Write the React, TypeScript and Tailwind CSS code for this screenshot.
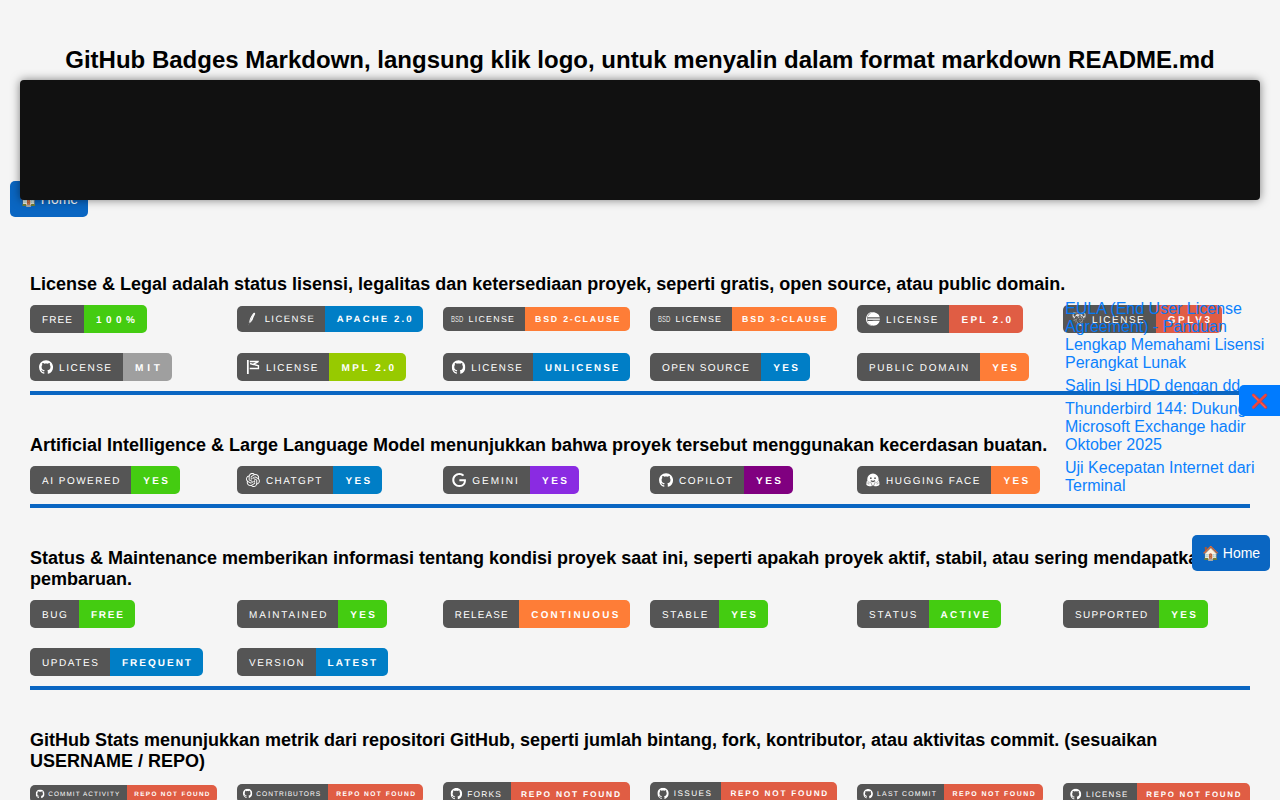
import type { ComponentType } from "react";
import { SiApache, SiEclipseide, SiGithub, SiGnu, SiGoogle, SiOpenai } from "react-icons/si";

type Logo = ComponentType<any>;

type BadgeData = {
  label: string;
  labelWidth: number;
  value: string;
  valueWidth: number;
  color: string;
  logo?: Logo;
};

const BRIGHT = "#44cc11";
const GREEN = "#97ca00";
const BLUE = "#007ec6";
const ORANGE = "#fe7d37";
const RED = "#e05d44";
const GREY = "#9f9f9f";

function MozillaLogo({ x, y }: any) {
  return (
    <svg x={x} y={y} width={14} height={14} viewBox="0 0 24 24" fill="none" stroke="#fff">
      <path d="M3.2 0v24" strokeWidth="3" />
      <path d="M6.5 2.6H22M20.500 3.200 12.500 7.400 21.500 10v4.600H6.5M7 6l6 1.800" strokeWidth="2.3" />
    </svg>
  );
}

function HuggingFaceLogo({ x, y }: any) {
  return (
    <svg x={x} y={y} width={14} height={14} viewBox="0 0 24 24">
      <path
        fill="#fff"
        d="M12 .8a9.900 9.900 0 0 0-9.800 9.900c0 1 .1 1.900.4 2.700C1.300 14 .9 15 1.200 16c-.8.8-.7 1.700-.3 2.400-.6 1-.3 1.900.7 2.500 1.600 1 3.800 1.900 5.900 1.900 1.400 0 2.400-.5 2.900-1.500h3.200c.5 1 1.500 1.500 2.900 1.500 2.100 0 4.300-.9 5.900-1.900 1-.6 1.300-1.500.7-2.500.4-.7.5-1.600-.3-2.400.3-1-.1-2-1.400-2.600.3-.8.4-1.700.4-2.700A9.900 9.900 0 0 0 12 .8Z"
      />
      <g fill="#555">
        <circle cx="8.400" cy="8.800" r="1.500" />
        <circle cx="15.600" cy="8.800" r="1.500" />
        <path d="M8.200 12c1.200.9 2.400 1.200 3.800 1.200s2.600-.3 3.800-1.200c.1 2.300-1.700 3.900-3.800 3.900s-3.900-1.600-3.800-3.900Z" />
      </g>
      <path
        d="M3.500 14.200l3 3.600M2.200 17l3.300 2.400M20.500 14.200l-3 3.600M21.800 17l-3.300 2.400M7.300 14.800l2 2.900.9 3.500M16.700 14.800l-2 2.900-.9 3.500"
        stroke="#555"
        strokeWidth=".9"
        fill="none"
      />
    </svg>
  );
}

function BsdLogo({ x, y }: any) {
  return (
    <text x={x} y={y + 10.4} fontSize="9.6" textLength="14" lengthAdjust="spacingAndGlyphs" fill="#fff" fillOpacity="0.85">
      BSD
    </text>
  );
}

function b(
  label: string,
  labelWidth: number,
  value: string,
  valueWidth: number,
  color: string,
  logo?: Logo,
): BadgeData {
  return { label, labelWidth, value, valueWidth, color, logo };
}

const repo = (label: string, width: number) => b(label, width, "REPO NOT FOUND", 118.5, RED, SiGithub);

const sections: { title: string; badges: BadgeData[] }[] = [
  {
    title:
      "License & Legal adalah status lisensi, legalitas dan ketersediaan proyek, seperti gratis, open source, atau public domain.",
    badges: [
      b("FREE", 30, "100%", 39, BRIGHT),
      b("LICENSE", 51.75, "APACHE 2.0", 78.5, BLUE, SiApache),
      b("LICENSE", 51.75, "BSD 2-CLAUSE", 96, ORANGE, BsdLogo),
      b("LICENSE", 51.75, "BSD 3-CLAUSE", 96, ORANGE, BsdLogo),
      b("LICENSE", 51.75, "EPL 2.0", 49.75, RED, SiEclipseide),
      b("LICENSE", 51.75, "GPLV3", 42.25, RED, SiGnu),
      b("LICENSE", 51.75, "MIT", 24.75, GREY, SiGithub),
      b("LICENSE", 51.75, "MPL 2.0", 52.75, GREEN, MozillaLogo),
      b("LICENSE", 51.75, "UNLICENSE", 75.25, BLUE, SiGithub),
      b("OPEN SOURCE", 86.75, "YES", 24.75, BLUE),
      b("PUBLIC DOMAIN", 99.25, "YES", 24.75, ORANGE),
    ],
  },
  {
    title:
      "Artificial Intelligence & Large Language Model menunjukkan bahwa proyek tersebut menggunakan kecerdasan buatan.",
    badges: [
      b("AI POWERED", 77.5, "YES", 24.75, BRIGHT),
      b("CHATGPT", 55.75, "YES", 24.75, BLUE, SiOpenai),
      b("GEMINI", 45.5, "YES", 24.75, "#8a2be2", SiGoogle),
      b("COPILOT", 52.75, "YES", 24.75, "#800080", SiGithub),
      b("HUGGING FACE", 94, "YES", 24.75, ORANGE, HuggingFaceLogo),
    ],
  },
  {
    title:
      "Status & Maintenance memberikan informasi tentang kondisi proyek saat ini, seperti apakah proyek aktif, stabil, atau sering mendapatkan pembaruan.",
    badges: [
      b("BUG", 24.75, "FREE", 32, BRIGHT),
      b("MAINTAINED", 77.5, "YES", 24.75, BRIGHT),
      b("RELEASE", 53.75, "CONTINUOUS", 88.5, ORANGE),
      b("STABLE", 45.5, "YES", 24.75, BRIGHT),
      b("STATUS", 47.5, "ACTIVE", 48.5, BRIGHT),
      b("SUPPORTED", 72.25, "YES", 24.75, BRIGHT),
      b("UPDATES", 55.75, "FREQUENT", 69, BLUE),
      b("VERSION", 54.75, "LATEST", 48.5, BLUE),
    ],
  },
  {
    title:
      "GitHub Stats menunjukkan metrik dari repositori GitHub, seperti jumlah bintang, fork, kontributor, atau aktivitas commit. (sesuaikan USERNAME / REPO)",
    badges: [
      repo("COMMIT ACTIVITY", 111.75),
      repo("CONTRIBUTORS", 96),
      repo("FORKS", 40.25),
      repo("ISSUES", 45.5),
      repo("LAST COMMIT", 84.75),
      repo("LICENSE", 51.75),
    ],
  },
];

const articles = [
  "EULA (End User License Agreement) - Panduan Lengkap Memahami Lisensi Perangkat Lunak",
  "Salin Isi HDD dengan dd",
  "Thunderbird 144: Dukungan Microsoft Exchange hadir Oktober 2025",
  "Uji Kecepatan Internet dari Terminal",
];

const COLUMN_WIDTH = 186.67;

const COLUMN_SHIFT = [0, -0.33, 0.33];

// Badges wider than a column shrink to fit; heights near full size land on whole pixels.
function badgeHeight(width: number) {
  const height = Math.min(28, (28 * COLUMN_WIDTH) / width);
  return height > 24 ? 2 * Math.round(height / 2) : height;
}

function Badge({ label, labelWidth, value, valueWidth, color, logo: Logo, index }: BadgeData & { index: number }) {
  const textStart = Logo ? 29 : 12;
  const left = textStart + labelWidth + 12;
  const right = valueWidth + 24;
  const width = left + right;
  return (
    <svg
      role="img"
      aria-label={`${label}: ${value}`}
      width={Math.round(width + COLUMN_SHIFT[index % 3])}
      viewBox={`0 0 ${width} 28`}
      preserveAspectRatio="none"
      className="block max-w-full cursor-pointer rounded-[5px]"
      style={{ height: badgeHeight(width) }}
    >
      <g shapeRendering="crispEdges">
        <rect width={left} height="28" fill="#555" />
        <rect x={left} width={right + 1} height="28" fill={color} />
      </g>
      {Logo && <Logo x={9} y={7} size={14} fill="#fff" color="#fff" />}
      <g fill="#fff" textAnchor="middle" fontSize="100" textRendering="geometricPrecision">
        <text transform="scale(.1)" x={(textStart + labelWidth / 2) * 10} y="175" textLength={labelWidth * 10}>
          {label}
        </text>
        <text
          transform="scale(.1)"
          x={(left + right / 2) * 10}
          y="175"
          textLength={valueWidth * 10}
          fontWeight="bold"
        >
          {value}
        </text>
      </g>
    </svg>
  );
}

function HomeButton({ className }: { className: string }) {
  return (
    <a
      className={`absolute flex h-9 w-[78px] items-center justify-center rounded-[5px] bg-[#0a66c2] text-sm whitespace-nowrap text-white ${className}`}
    >
      🏠 Home
    </a>
  );
}

export default function App() {
  return (
    <div className="relative h-screen overflow-hidden bg-[#f5f5f5] font-['Liberation_Sans',Arial,sans-serif] text-black">
      <HomeButton className="top-[181px] left-[10px]" />

      <header className="relative px-5 pt-[46px]">
        <h1 className="mb-[7px] text-center text-2xl leading-[27px] font-bold">
          GitHub Badges Markdown, langsung klik logo, untuk menyalin dalam format markdown README.md
        </h1>
        <div className="h-[120px] rounded-[4px] bg-[#111] shadow-[0_0_10px_rgba(0,0,0,0.5)]" />
      </header>

      <main className="flex flex-col gap-10 px-[30px] pt-[74px]">
        {sections.map((section) => (
          <section key={section.title} className="border-b-4 border-[#0a66c2] pb-2.5">
            <h2 className="mb-2.5 text-lg leading-[21px] font-bold">{section.title}</h2>
            <div className="grid grid-cols-[187px_186px_187px_187px_186px_187px] items-center gap-5">
              {section.badges.map((badge, index) => (
                <Badge key={badge.label + badge.value} index={index} {...badge} />
              ))}
            </div>
          </section>
        ))}
      </main>

      <aside className="absolute top-[300px] left-[1065px] w-[205px] opacity-95">
        <ul className="flex flex-col gap-[5px] text-base leading-[18px] text-[#007bff]">
          {articles.map((title) => (
            <li key={title}>{title}</li>
          ))}
        </ul>
      </aside>
      <button className="absolute top-[384.5px] right-0 flex h-[31px] w-[41px] items-center justify-center rounded-l-[5px] bg-[#007bff] pt-0.5 text-sm text-white">
        ❌
      </button>
      <HomeButton className="top-[535px] right-[10px]" />
    </div>
  );
}
